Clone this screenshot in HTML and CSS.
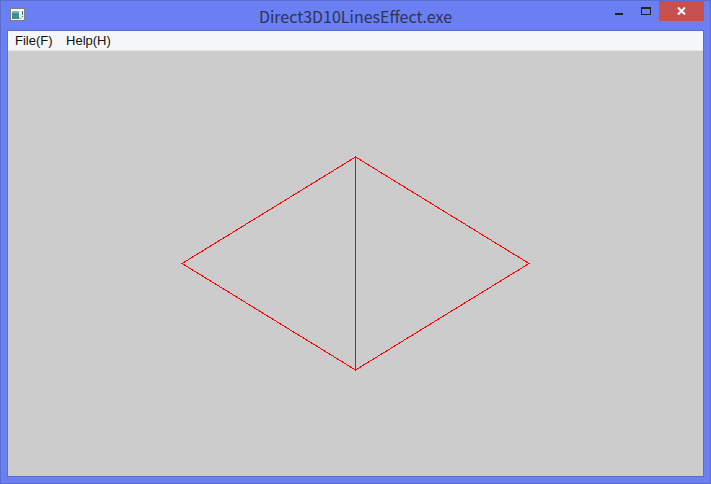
FILE: index.html
```html
<!DOCTYPE html>
<html lang="en">
<head>
<meta charset="utf-8">
<title>Direct3D10LinesEffect.exe</title>
<link rel="stylesheet" href="styles.css">
</head>
<body>
<div class="window">
  <header class="titlebar">
    <svg class="app-icon" width="15" height="13" viewBox="0 0 15 13">
      <rect x="0.5" y="0.5" width="14" height="12" fill="#eef1f4" stroke="#7c7f86"/>
      <rect x="1" y="1" width="13" height="2" fill="#f8f9fb"/>
      <rect x="2" y="3" width="7" height="8" fill="#3f8f8c"/>
      <rect x="2" y="3" width="7" height="2" fill="#7fb4ae"/>
      <rect x="9" y="9" width="3" height="2" fill="#c9ccd0"/>
      <rect x="12" y="3" width="1" height="4" fill="#3d6f90"/>
      <rect x="12" y="8" width="1" height="1" fill="#3d6f90"/>
    </svg>
    <div class="title">Direct3D10LinesEffect.exe</div>
    <div class="controls">
      <div class="ctl ctl-min"><span class="min-glyph"></span></div>
      <div class="ctl ctl-max"><span class="max-glyph"></span></div>
      <div class="ctl ctl-close">
        <svg width="9" height="8" viewBox="0 0 9 8"><path d="M1 0.5 L8 7.5 M8 0.5 L1 7.5" stroke="#fff" stroke-width="2" fill="none"/></svg>
      </div>
    </div>
  </header>
  <div class="client">
    <nav class="menubar">
      <span class="menu-item">File(F)</span>
      <span class="menu-item">Help(H)</span>
    </nav>
    <main class="canvas">
      <svg class="scene" width="695" height="425" viewBox="0 0 695 425" shape-rendering="crispEdges">
        <path d="M347.5 106 L174 212.5 L347.5 319 L521 212.5 Z M347.5 106 L347.5 319" fill="none" stroke="#ff0000" stroke-width="1"/>
      </svg>
    </main>
  </div>
</div>
</body>
</html>
```
FILE: styles.css
```css
html, body {
  margin: 0;
  padding: 0;
  height: 100%;
}
body {
  background: #6a7ff2;
  overflow: hidden;
}
.window {
  box-sizing: border-box;
  width: 711px;
  height: 484px;
  display: flex;
  flex-direction: column;
  background: #6a7ff2;
  border: 1px solid #5a6cd0;
  padding: 0 7px 7px;
}
.titlebar {
  height: 30px;
  flex: none;
  display: flex;
  align-items: flex-start;
  position: relative;
}
.app-icon {
  margin: 7px 0 0 2px;
  flex: none;
}
.title {
  position: absolute;
  left: 0;
  right: 0;
  top: 5px;
  text-align: center;
  font: 16px/20px "Noto Sans CJK JP", "Noto Sans", sans-serif;
  color: #2f3550;
}
.controls {
  margin-left: auto;
  display: flex;
  height: 20px;
  margin-right: -1px;
}
.ctl {
  display: flex;
  align-items: center;
  justify-content: center;
}
.ctl-min {
  width: 28px;
}
.ctl-max {
  width: 26px;
}
.ctl-close {
  width: 45px;
  background: #c75050;
}
.min-glyph {
  display: block;
  width: 8px;
  height: 2px;
  background: #222;
  margin-top: 6px;
}
.max-glyph {
  display: block;
  box-sizing: border-box;
  width: 10px;
  height: 8px;
  border: 1px solid #222;
  border-top-width: 2px;
}
.client {
  flex: 1;
  display: flex;
  flex-direction: column;
  min-height: 0;
  box-shadow: 0 0 0 1px #5a6cd0;
}
.menubar {
  height: 19px;
  flex: none;
  display: flex;
  align-items: center;
  gap: 13.5px;
  padding-left: 7px;
  background: #f5f6f7;
  border-bottom: 1px solid #e6e6e6;
  font: 13px/19px "Liberation Sans", Arial, sans-serif;
  color: #111;
}
.canvas {
  flex: 1;
  min-height: 0;
  background: #cccccc;
}
.scene {
  display: block;
}
```
